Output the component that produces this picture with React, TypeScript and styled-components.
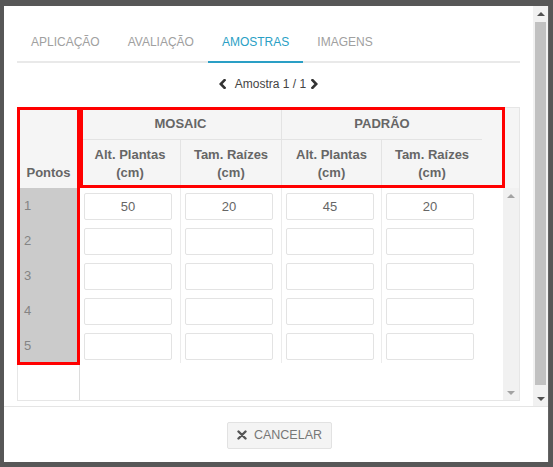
import React from 'react';
import styled, {createGlobalStyle, css} from 'styled-components';

const TABS = ['Aplicação', 'Avaliação', 'Amostras', 'Imagens'];
const ACTIVE_TAB = 'Amostras';

const GROUPS = ['MOSAIC', 'PADRÃO'];
const SUB_COLUMNS = ['Alt. Plantas', 'Tam. Raízes'];

// one row per ponto: mosaic alt, mosaic tam, padrao alt, padrao tam
const ROWS = [
  ['50', '20', '45', '20'],
  ['', '', '', ''],
  ['', '', '', ''],
  ['', '', '', ''],
  ['', '', '', ''],
];

const GlobalStyle = createGlobalStyle`
  html, body {
    margin: 0;
    padding: 0;
  }

  body {
    background: #575757;
    font-family: "Liberation Sans", Arial, sans-serif;
  }
`;

// classic scroll rail: arrow, track (with optional thumb), arrow
const ScrollRail: React.FC<{disabled?: boolean; width: number; thumbTop?: number; thumbBottom?: number}> = ({
  disabled,
  width,
  thumbTop = 0,
  thumbBottom = 0,
}) => (
  <Rail $width={width}>
    <RailButton $width={width}>
      <Arrow $dir="up" $disabled={disabled} />
    </RailButton>
    <Track>{!disabled && <Thumb $top={thumbTop} $bottom={thumbBottom} />}</Track>
    <RailButton $width={width}>
      <Arrow $dir="down" $disabled={disabled} />
    </RailButton>
  </Rail>
);

const App = () => (
  <>
    <GlobalStyle />
    <Backdrop>
      <Modal>
        <ModalBody>
          <BodyContent>
            <TabList>
              {TABS.map((tab) => (
                <Tab key={tab} $active={tab === ACTIVE_TAB}>{tab}</Tab>
              ))}
            </TabList>

            <Pager>
              <Chevron $side="left" width="7" height="10" viewBox="0 0 7 10">
                <polyline points="5.5,1.2 1.8,5 5.5,8.8" />
              </Chevron>
              <span>Amostra 1 / 1</span>
              <Chevron $side="right" width="7" height="10" viewBox="0 0 7 10">
                <polyline points="1.5,1.2 5.2,5 1.5,8.8" />
              </Chevron>
            </Pager>

            <Grid>
              <PointsColumn>
                <PointsHead>Pontos</PointsHead>
                {ROWS.map((_, i) => (
                  <PointCell key={i}>{i + 1}</PointCell>
                ))}
              </PointsColumn>

              <DataSide>
                <HeaderGrid>
                  {GROUPS.map((group, g) => (
                    <GroupCell key={group} $divider={g < GROUPS.length - 1}>{group}</GroupCell>
                  ))}
                  {GROUPS.map((group, g) =>
                    SUB_COLUMNS.map((col, c) => (
                      <SubCell key={group + col} $divider={!(g === GROUPS.length - 1 && c === SUB_COLUMNS.length - 1)}>
                        {col}
                        <br />
                        (cm)
                      </SubCell>
                    )),
                  )}
                </HeaderGrid>

                <BodyArea>
                  <Rows>
                    {ROWS.map((row, r) => (
                      <DataRow key={r}>
                        {row.map((value, c) => (
                          <DataCell key={c} $divider={c < row.length - 1}>
                            <ValueInput type="text" defaultValue={value} />
                          </DataCell>
                        ))}
                      </DataRow>
                    ))}
                  </Rows>
                  <ScrollRail disabled width={16} />
                </BodyArea>
              </DataSide>

              <Highlight $left={-1} $top={-1} $width={63} $height={258} />
              <Highlight $left={62} $top={-1} $width={425} $height={81} />
            </Grid>
          </BodyContent>
          <ScrollRail width={15} thumbTop={1} thumbBottom={6} />
        </ModalBody>

        <Footer>
          <CancelButton type="button">
            <svg width="10" height="10" viewBox="0 0 10 10">
              <path d="M1.5 1.5 L8.5 8.5 M8.5 1.5 L1.5 8.5" stroke="#555" strokeWidth="2.4" strokeLinecap="round" />
            </svg>
            CANCELAR
          </CancelButton>
        </Footer>
      </Modal>
    </Backdrop>
  </>
);

const Backdrop = styled.div`
  width: 553px;
  height: 467px;
  box-sizing: border-box;
  padding: 6px 5px 5px 4px;
  display: flex;
  background: #575757;
`;

const Modal = styled.div`
  width: 544px;
  height: 456px;
  display: flex;
  flex-direction: column;
  background: #fff;
  box-shadow: 1px 0 0 rgba(255, 255, 255, 0.08);
`;

const ModalBody = styled.div`
  height: 400px;
  display: flex;
  overflow: hidden;
`;

const BodyContent = styled.div`
  flex: 1;
  min-width: 0;
  padding: 16px 13px 0 13px;
`;

const Rail = styled.div<{$width: number}>`
  width: ${({$width}) => $width}px;
  flex-shrink: 0;
  display: flex;
  flex-direction: column;
  background: #f1f1f1;
`;

const RailButton = styled.div<{$width: number}>`
  height: 15px;
  width: ${({$width}) => $width}px;
  display: flex;
  align-items: center;
  justify-content: center;
`;

const Arrow = styled.div<{$dir: 'up' | 'down'; $disabled?: boolean}>`
  width: 0;
  height: 0;
  border-left: 4px solid transparent;
  border-right: 4px solid transparent;
  ${({$dir, $disabled}) => {
    const color = $disabled ? '#a3a3a3' : '#505050';
    return $dir === 'up'
      ? css`border-bottom: 4px solid ${color};`
      : css`border-top: 4px solid ${color};`;
  }}
`;

const Track = styled.div`
  flex: 1;
  position: relative;
`;

const Thumb = styled.div<{$top: number; $bottom: number}>`
  position: absolute;
  left: 2px;
  right: 2px;
  top: ${({$top}) => $top}px;
  bottom: ${({$bottom}) => $bottom}px;
  background: #c1c1c1;
`;

const TabList = styled.div`
  display: flex;
  border-bottom: 2px solid #e9e9e9;
`;

const Tab = styled.div<{$active?: boolean}>`
  padding: 12px 14px 11px;
  margin-bottom: -2px;
  line-height: 16px;
  font-size: 12px;
  text-transform: uppercase;
  color: ${({$active}) => ($active ? '#2a9fc5' : '#a0a0a0')};
  border-bottom: 2px solid ${({$active}) => ($active ? '#2a9fc5' : 'transparent')};
  cursor: pointer;
`;

const Pager = styled.div`
  display: flex;
  align-items: center;
  justify-content: center;
  margin: 13px 0 15px;
  height: 16px;
  font-size: 12px;
  color: #444;
`;

const Chevron = styled.svg<{$side: 'left' | 'right'}>`
  margin: ${({$side}) => ($side === 'left' ? '0 9px 0 0' : '0 0 0 5px')};

  & polyline {
    fill: none;
    stroke: #333;
    stroke-width: 2.6;
    stroke-linecap: square;
  }
`;

const Grid = styled.div`
  position: relative;
  display: flex;
  width: 503px;
  height: 294px;
  box-sizing: border-box;
  border: 1px solid #e6e6e6;
`;

const PointsColumn = styled.div`
  width: 62px;
  flex-shrink: 0;
  box-sizing: border-box;
  border-right: 1px solid #dcdcdc;
`;

const PointsHead = styled.div`
  height: 80px;
  box-sizing: border-box;
  display: flex;
  align-items: flex-end;
  justify-content: center;
  padding-bottom: 7px;
  line-height: 16px;
  background: #f5f5f5;
  font-size: 13px;
  font-weight: bold;
  color: #666;
`;

const PointCell = styled.div`
  height: 35px;
  line-height: 35px;
  padding-left: 6px;
  background: #cbcbcb;
  font-size: 13px;
  color: #848484;
`;

const DataSide = styled.div`
  flex: 1;
  min-width: 0;
  display: flex;
  flex-direction: column;
`;

const HeaderGrid = styled.div`
  height: 80px;
  display: grid;
  grid-template-columns: 101px 101px 100px 100px;
  grid-template-rows: 32px 48px;
  background: #f5f5f5;
  font-size: 13px;
  font-weight: bold;
  color: #666;
  text-align: center;
`;

const GroupCell = styled.div<{$divider?: boolean}>`
  grid-column: span 2;
  display: flex;
  align-items: center;
  justify-content: center;
  border-bottom: 1px solid #e3e3e3;
  border-right: ${({$divider}) => ($divider ? '1px solid #e3e3e3' : 'none')};
`;

const SubCell = styled.div<{$divider?: boolean}>`
  display: flex;
  align-items: center;
  justify-content: center;
  line-height: 18px;
  border-right: ${({$divider}) => ($divider ? '1px solid #e3e3e3' : 'none')};
`;

const BodyArea = styled.div`
  flex: 1;
  display: flex;
  min-height: 0;
`;

const Rows = styled.div`
  flex: 1;
  min-width: 0;
`;

const DataRow = styled.div`
  display: grid;
  grid-template-columns: 101px 101px 100px 100px;
  height: 35px;
`;

const DataCell = styled.div<{$divider?: boolean}>`
  padding: 5px 0 0 4px;
  border-right: ${({$divider}) => ($divider ? '1px solid #ececec' : 'none')};
`;

const ValueInput = styled.input`
  width: 88px;
  height: 27px;
  box-sizing: border-box;
  border: 1px solid #e3e3e3;
  border-radius: 2px;
  padding: 0;
  text-align: center;
  font-family: "Liberation Sans", Arial, sans-serif;
  font-size: 13px;
  color: #666;
  outline: none;
`;

const Highlight = styled.div<{$left: number; $top: number; $width: number; $height: number}>`
  position: absolute;
  left: ${({$left}) => $left}px;
  top: ${({$top}) => $top}px;
  width: ${({$width}) => $width}px;
  height: ${({$height}) => $height}px;
  box-sizing: border-box;
  border: 3px solid #f00;
  pointer-events: none;
`;

const Footer = styled.div`
  flex: 1;
  display: flex;
  align-items: center;
  justify-content: center;
  border-top: 1px solid #e5e5e5;
  padding: 1px 0 0 7px;
`;

const CancelButton = styled.button`
  display: inline-flex;
  align-items: center;
  gap: 7px;
  height: 27px;
  padding: 0 9px;
  box-sizing: border-box;
  background: #f4f4f4;
  border: 1px solid #e2e2e2;
  border-radius: 2px;
  font-family: "Liberation Sans", Arial, sans-serif;
  font-size: 12.5px;
  color: #777;
  cursor: pointer;
`;

export default App;
